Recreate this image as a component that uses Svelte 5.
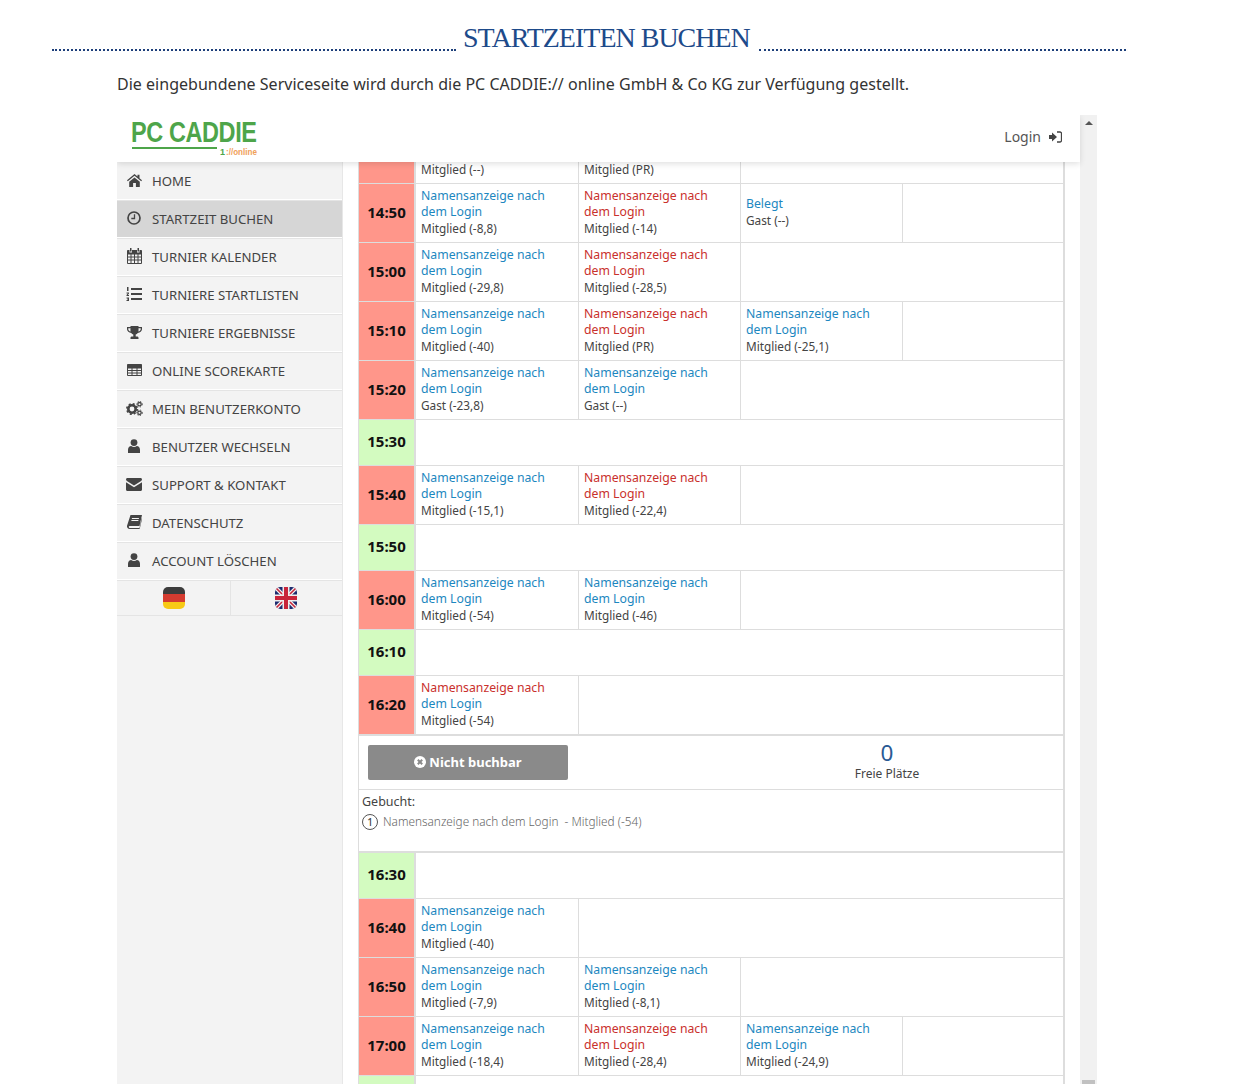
<script>
  const nav = [
    ['HOME', 'home'], ['STARTZEIT BUCHEN', 'clock'], ['TURNIER KALENDER', 'cal'], ['TURNIERE STARTLISTEN', 'list'],
    ['TURNIERE ERGEBNISSE', 'trophy'], ['ONLINE SCOREKARTE', 'table'], ['MEIN BENUTZERKONTO', 'gears'],
    ['BENUTZER WECHSELN', 'user'], ['SUPPORT & KONTAKT', 'mail'], ['DATENSCHUTZ', 'book'], ['ACCOUNT LÖSCHEN', 'user']
  ];
  const p = (t, c = 'b', c2 = 'b') => ({ t, c, c2 });
  const rows = [
    { time: '', cut: true, cells: [p('Mitglied (--)'), p('Mitglied (PR)')] },
    { time: '14:50', cells: [p('Mitglied (-8,8)'), p('Mitglied (-14)', 'r', 'r'), { belegt: true }] },
    { time: '15:00', cells: [p('Mitglied (-29,8)'), p('Mitglied (-28,5)', 'r', 'r')] },
    { time: '15:10', cells: [p('Mitglied (-40)'), p('Mitglied (PR)', 'r', 'r'), p('Mitglied (-25,1)')] },
    { time: '15:20', cells: [p('Gast (-23,8)'), p('Gast (--)')] },
    { time: '15:30', free: true },
    { time: '15:40', cells: [p('Mitglied (-15,1)'), p('Mitglied (-22,4)', 'r', 'r')] },
    { time: '15:50', free: true },
    { time: '16:00', cells: [p('Mitglied (-54)'), p('Mitglied (-46)')] },
    { time: '16:10', free: true },
    { time: '16:20', cells: [p('Mitglied (-54)', 'r', 'b')] },
    { detail: true },
    { time: '16:30', free: true },
    { time: '16:40', cells: [p('Mitglied (-40)')] },
    { time: '16:50', cells: [p('Mitglied (-7,9)'), p('Mitglied (-8,1)')] },
    { time: '17:00', cells: [p('Mitglied (-18,4)'), p('Mitglied (-28,4)', 'r', 'r'), p('Mitglied (-24,9)')] },
    { time: '', free: true }
  ];
</script>

<div class="page">
  <div class="heading">
    <span class="dots first"></span>
    <h1>STARTZEITEN BUCHEN</h1>
    <span class="dots"></span>
  </div>
  <p class="intro">Die eingebundene Serviceseite wird durch die PC CADDIE:// online GmbH &amp; Co KG zur Verfügung gestellt.</p>

  <div class="frame">
    <div class="view">
      <header>
        <div class="logo">
          <div class="logo-word">PC CADDIE</div>
          <div class="logo-sub"><span class="logo-line"></span><span class="logo-one">1</span><span class="logo-online">://online</span></div>
        </div>
        <div class="login">Login
          <svg width="13" height="12" viewBox="0 0 13 12"><path fill="#444" d="M0 4h3V1.500L8 6l-5 4.500V8H0z"/><path fill="none" stroke="#444" stroke-width="1.300" d="M8 1h3a1.500 1.500 0 0 1 1.500 1.500v7A1.500 1.500 0 0 1 11 11H8"/></svg>
        </div>
      </header>
      <div class="body">
        <nav>
          {#each nav as [label, icon], i}
            <div class="item" class:active={i === 1}>
              <span class="ico">
                {#if icon === 'home'}
                  <svg width="15" height="13" viewBox="0 0 15 13"><path fill="#444" d="M7.500 0 0 6.300l.8 1L7.500 1.800l6.700 5.500.8-1L12.500 4.200V.8h-2v1.700zM2.200 7.800V13h3.900V9h2.800v4h3.900V7.800L7.500 3.400z"/></svg>
                {:else if icon === 'clock'}
                  <svg width="14" height="14" viewBox="0 0 14 14"><circle cx="7" cy="7" r="6" fill="none" stroke="#444" stroke-width="1.700"/><path fill="none" stroke="#444" stroke-width="1.300" d="M7.500 3.200v4.300H4.300"/></svg>
                {:else if icon === 'cal'}
                  <svg width="15" height="16" viewBox="0 0 15 16"><path fill="none" stroke="#444" d="M.5 2.500h14v13H.5zM.5 6h14M.5 9h14M.5 12h14M4 6v9.500M7.500 6v9.500M11 6v9.500"/><path fill="#444" d="M.5 2.500h14V6H.5z"/><path fill="#f3f3f3" d="M2.500 1h2.500v3.500H2.500zM10 1h2.500v3.500H10z"/><path fill="#444" d="M3 0h1.500v3.500H3zM10.500 0H12v3.500h-1.500z"/></svg>
                {:else if icon === 'list'}
                  <svg width="16" height="14" viewBox="0 0 16 14"><path fill="#444" d="M5 1h11v2H5zM5 6h11v2H5zM5 11h11v2H5zM1 0h1.500v4H1zM.5 5.500h2.500v1L1.800 8H3v1H.5V8l1.300-1.500H.5zM.5 10.500H3v3.500H.5V13h1.500v-.4H1v-.8h1v-.4H.5z"/></svg>
                {:else if icon === 'trophy'}
                  <svg width="15" height="13" viewBox="0 0 15 13"><path fill="#444" d="M3.500 0h8v1H15v2.300c0 1.900-2 3.400-4.200 3.600-.6.800-1.300 1.300-2.100 1.500V10.500h1.800c.7 0 1 .8 1 1.500v1H3.500v-1c0-.7.300-1.500 1-1.500h1.800V8.400c-.8-.2-1.500-.7-2.100-1.500C2 6.700 0 5.200 0 3.300V1h3.500zM1.300 2.200v1c0 1 .9 1.900 2.300 2.300-.2-.9-.2-2.200-.1-3.300zm10.200 0c.1 1.100.1 2.400-.1 3.300 1.400-.4 2.300-1.300 2.300-2.300v-1z"/></svg>
                {:else if icon === 'table'}
                  <svg width="15" height="12" viewBox="0 0 15 12"><path fill="none" stroke="#444" d="M.5.5h14v11H.5zM.5 4h14M.5 6.500h14M.5 9h14M5 4v7.500M10 4v7.500"/><path fill="#444" d="M.5.5h14V4H.5z"/></svg>
                {:else if icon === 'gears'}
                  <svg width="17" height="15" viewBox="0 0 17 15"><circle cx="6" cy="8" r="3.700" fill="none" stroke="#444" stroke-width="2.600"/><circle cx="6" cy="8" r="5.200" fill="none" stroke="#444" stroke-width="1.600" stroke-dasharray="2 2.100"/><circle cx="13.500" cy="3.200" r="1.700" fill="none" stroke="#444" stroke-width="1.300"/><circle cx="13.500" cy="3.200" r="2.800" fill="none" stroke="#444" stroke-width="1" stroke-dasharray="1.200 1.500"/><circle cx="13.500" cy="11.800" r="1.700" fill="none" stroke="#444" stroke-width="1.300"/><circle cx="13.500" cy="11.800" r="2.800" fill="none" stroke="#444" stroke-width="1" stroke-dasharray="1.200 1.500"/></svg>
                {:else if icon === 'user'}
                  <svg width="12" height="14" viewBox="0 0 12 14"><circle cx="6" cy="3.600" r="3.400" fill="#444"/><path fill="#444" d="M0 14v-3.200C0 8.500 1.500 7 3.200 7c.8.600 1.800 1 2.800 1s2-.4 2.800-1C10.500 7 12 8.500 12 10.800V14z"/></svg>
                {:else if icon === 'mail'}
                  <svg width="16" height="13" viewBox="0 0 16 13"><path fill="#444" d="M1.500 0h13C15.400 0 16 .6 16 1.500c0 .6-.4 1.100-.9 1.500L8 7.500.9 3C.4 2.600 0 2.100 0 1.500 0 .6.600 0 1.500 0zM0 4.300l8 5 8-5v7.200c0 .9-.6 1.500-1.500 1.500h-13C.6 13 0 12.400 0 11.500z"/></svg>
                {:else if icon === 'book'}
                  <svg width="15" height="14" viewBox="0 0 15 14"><path fill="#444" d="M3.500 0H15l-2.500 11H2.800c-.8 0-1.100.5-1 1 .1.400.5 1 1.200 1H12.500l2.200-10 .3 1-2.200 9.500c-.1.300-.3.500-.7.500H2.500C1.200 14 .2 13 0 11.800-.1 11.400 0 11 .1 10.600z"/><path fill="#f3f3f3" d="M5 3h7l-.2 1H4.800zM4.500 5h7l-.2 1h-7z"/></svg>
                {/if}
              </span>
              <span class="lab">{label}</span>
            </div>
          {/each}
          <div class="flags">
            <span class="flag-cell">
              <span class="flag de"><i></i><i></i><i></i></span>
            </span>
            <span class="flag-cell">
              <svg class="flag" width="22" height="22" viewBox="0 0 22 22"><defs><clipPath id="uk"><rect width="22" height="22" rx="5"/></clipPath></defs><g clip-path="url(#uk)"><rect width="22" height="22" fill="#1c2a6e"/><path stroke="#eee" stroke-width="4" d="M0 0l22 22M22 0L0 22"/><path stroke="#c8243a" stroke-width="1.500" d="M0 0l22 22M22 0L0 22"/><path stroke="#eee" stroke-width="7" d="M11 0v22M0 11h22"/><path stroke="#c8243a" stroke-width="4" d="M11 0v22M0 11h22"/></g></svg>
            </span>
          </div>
        </nav>
        <main>
          <div class="table">
            {#each rows as r}
              {#if r.detail}
                <div class="detail">
                  <div class="book-row">
                    <button class="btn">
                      <svg width="12" height="12" viewBox="0 0 12 12"><circle cx="6" cy="6" r="6" fill="#fff"/><path stroke="#8a8a8a" stroke-width="2" d="M3.800 3.800l4.400 4.400M8.200 3.800L3.800 8.200"/></svg>
                      Nicht buchbar
                    </button>
                    <div class="seats"><div class="n">0</div><div class="fp">Freie Plätze</div></div>
                  </div>
                  <div class="booked">
                    <div class="gb">Gebucht:</div>
                    <div class="who"><span class="num">1</span><span>Namensanzeige nach dem Login&nbsp; - Mitglied (-54)</span></div>
                  </div>
                </div>
              {:else}
                <div class="row" class:cut={r.cut} class:free={r.free}>
                  <div class="time" class:green={r.free}>{r.time}</div>
                  {#if r.free}
                    <div class="empty"></div>
                  {:else}
                    {#each r.cells as c}
                      {#if c.t}
                        <div class="cell">
                          <div class="nm {c.c}">Namensanzeige nach</div>
                          <div class="nm {c.c2}">dem Login</div>
                          <div class="st">{c.t}</div>
                        </div>
                      {:else if c.belegt}
                        <div class="cell mid"><div class="nm b">Belegt</div><div class="st">Gast (--)</div></div>
                      {/if}
                    {/each}
                    <div class="empty"></div>
                  {/if}
                </div>
              {/if}
            {/each}
          </div>
        </main>
      </div>
    </div>
    <div class="scroll">
      <span class="up"></span>
      <span class="thumb"></span>
    </div>
  </div>
</div>

<style>
  :global(body) { margin: 0; background: #fff; overflow: hidden; }
  .page { height: 1084px; overflow: hidden; font-family: "Noto Sans", "Open Sans", sans-serif; color: #333; position: relative; }
  .heading { display: flex; align-items: flex-end; padding: 19px 0 0 52px; width: 1074px; height: 32px; gap: 7px; }
  .dots { flex: 1; border-bottom: 2px dotted #1d3f7a; height: 0; }
  .dots.first { flex: none; width: 404px; }
  h1 { margin: 0; font: 400 28px/32px "Liberation Serif", serif; color: #1d4a8a; white-space: nowrap; letter-spacing: -1px; position: relative; top: 3px; margin-right: 2px; }
  .intro { margin: 0; padding: 21px 0 0 117px; font-size: 16px; line-height: 24px; color: #333; height: 43px; letter-spacing: .02px; }
  .frame { margin-left: 117px; width: 980px; height: 969px; display: flex; overflow: hidden; }
  .view { width: 963px; display: flex; flex-direction: column; position: relative; }
  header { height: 47px; display: flex; justify-content: space-between; align-items: center; background: #fff; box-shadow: 0 2px 6px rgba(0,0,0,.12); position: relative; z-index: 2; padding: 0 18px 4px 14px; box-sizing: border-box; }
  .logo { width: 126px; color: #4ea54a; padding-top: 2px; }
  .logo-word { font: 700 29px/24px "Liberation Sans", sans-serif; transform: scaleX(.81); transform-origin: left; letter-spacing: -.5px; white-space: nowrap; color: #4ea54a; height: 26px; }
  .logo-sub { display: flex; align-items: flex-start; height: 10px; }
  .logo-line { width: 85px; height: 2px; background: #4ea54a; margin: 1px 3px 0 1px; flex: none; }
  .logo-one { font: 700 9px/12px "Liberation Sans", sans-serif; color: #4ea54a; margin-right: 1px; flex: none; }
  .logo-online { font: 700 9.500px/12px "Liberation Sans", sans-serif; color: #f0a05a; transform: scaleX(.85); transform-origin: left; white-space: nowrap; }
  .login { font-size: 14px; color: #555; display: flex; align-items: center; gap: 8px; }
  .body { flex: 1; display: flex; min-height: 0; }
  nav { width: 225px; flex: none; background: #f3f3f3; border-right: 1px solid #e7e7e7; padding-top: 1px; box-sizing: content-box; }
  .item { display: flex; align-items: center; border-bottom: 1px solid #e4e4e4; box-shadow: inset 0 -1px 0 #fff; font-size: 13.200px; color: #444; box-sizing: border-box; height: 38px; padding-bottom: 2px; }
  .item.active { background: #d6d6d6; background-clip: padding-box; }
  .ico { width: 35px; flex: none; display: flex; justify-content: center; padding-right: 1px; box-sizing: border-box; margin-top: -1px; }
  .lab { white-space: nowrap; }
  .flags { display: flex; height: 34px; border-bottom: 1px solid #e4e4e4; }
  .flag-cell { flex: none; width: 113px; display: flex; align-items: center; justify-content: center; box-sizing: border-box; }
  .flag-cell + .flag-cell { border-left: 1px solid #e4e4e4; width: 111px; }
  .flag { width: 22px; height: 22px; border-radius: 5px; overflow: hidden; display: flex; flex-direction: column; }
  .de i { flex: 1; display: block; }
  .de i:nth-child(1) { background: #3c3c3c; }
  .de i:nth-child(2) { background: #d43b30; }
  .de i:nth-child(3) { background: #f8c916; }
  main { flex: 1; padding-left: 15px; padding-right: 15px; min-width: 0; overflow: hidden; }
  .table { border-left: 1px solid #ddd; border-right: 2px solid #ddd; width: 707px; box-sizing: border-box; }
  .row { display: flex; height: 59px; border-bottom: 1px solid #ddd; box-sizing: border-box; }
  .row.free { height: 46px; }
  .row.cut { height: 22px; align-items: flex-end; overflow: hidden; }
  .time { width: 55px; flex: none; align-self: stretch; background: #ff968a; color: #111; font-weight: 700; font-size: 15px; display: flex; align-items: center; justify-content: center; border-right: 2px solid #ddd; padding-bottom: 3px; box-sizing: content-box; }
  .time.green { background: #d3fbc0; }
  .cell { width: 156px; flex: none; padding: 3.700px 0 0 5px; border-right: 1px solid #ddd; font-size: 12.250px; line-height: 16.500px; align-self: stretch; }
  .row .time + .cell { width: 157px; }
  .row.cut .cell { padding: 0 0 6px 5px; display: flex; align-items: flex-end; }
  .row.cut .nm { display: none; }
  .cell.mid { display: flex; flex-direction: column; justify-content: center; padding: 0 0 2px 5px; }
  .empty { flex: 1; }
  .nm { white-space: nowrap; }
  .nm.b { color: #1c87c0; }
  .nm.r { color: #c9302c; }
  .st { color: #444; white-space: nowrap; font-size: 11.800px; line-height: 16px; margin-top: -1px; }
  .detail { height: 118px; box-sizing: border-box; border-top: 1px solid #ddd; border-bottom: 2px solid #ddd; }
  .book-row { display: flex; height: 53px; border-bottom: 1px solid #ddd; padding-left: 9px; align-items: center; justify-content: space-between; }
  .btn { width: 200px; height: 35px; border: 0; background: #8a8a8a; color: #fff; border-radius: 2px; font: 700 13px "Noto Sans", sans-serif; display: flex; align-items: center; justify-content: center; gap: 3px; padding: 0 0 2px; }
  .seats { width: 352px; text-align: center; margin-top: -5px; }
  .n { font-size: 22.500px; line-height: 28px; color: #2a5a94; }
  .fp { font-size: 12px; line-height: 14px; color: #444; }
  .booked { padding: 3px 3px; font-size: 12.500px; }
  .gb { line-height: 17px; color: #444; }
  .who { display: flex; align-items: center; margin-top: 1px; color: #666; line-height: 18px; font-size: 11.800px; font-weight: 300; padding-top: 1px; }
  .num { width: 14px; height: 14px; border: 1.500px solid #555; border-radius: 50%; font-size: 10px; line-height: 14px; text-align: center; margin-right: 5px; color: #444; font-weight: 500; flex: none; margin-top: 2px; }
  .scroll { width: 17px; flex: none; background: #f1f1f1; position: relative; }
  .up { position: absolute; left: 5px; top: 6px; border: 4px solid transparent; border-top: 0; border-bottom: 4px solid #555; }
  .thumb { position: absolute; left: 2px; right: 2px; bottom: 0; height: 4px; background: #c1c1c1; }
</style>
